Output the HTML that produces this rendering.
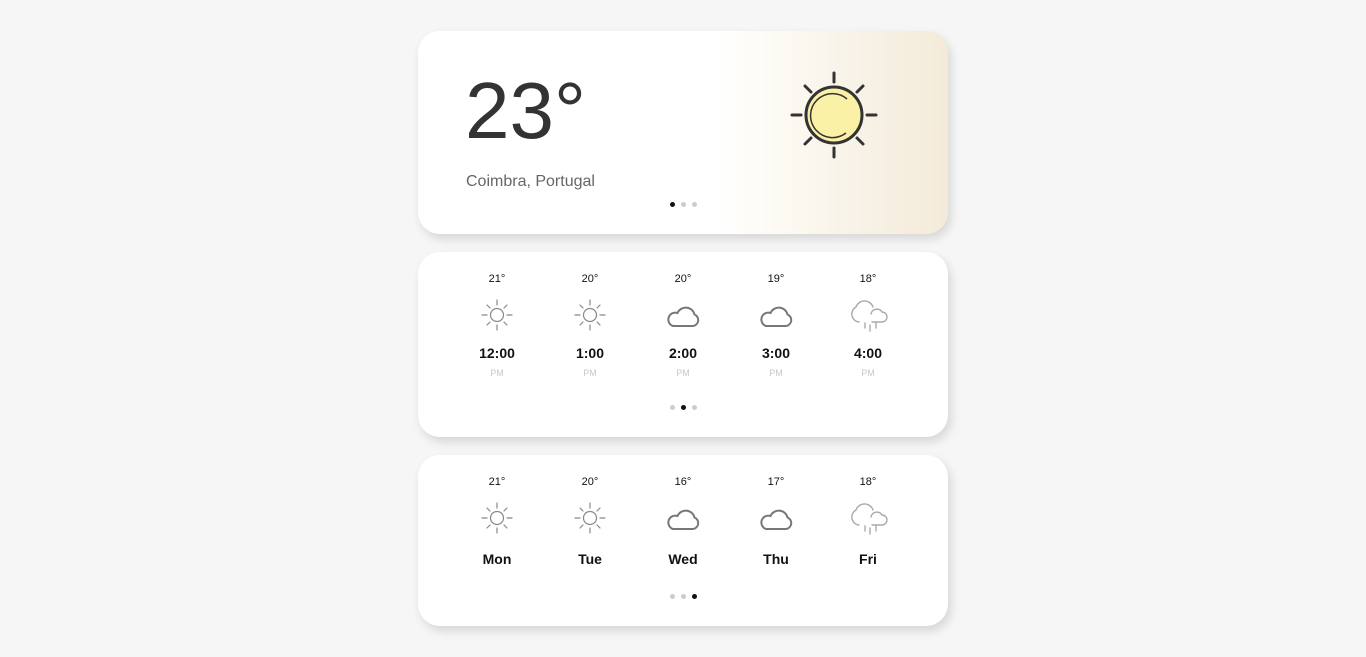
<!DOCTYPE html>
<html><head><meta charset="utf-8"><style>
*{margin:0;padding:0;box-sizing:border-box}
body{width:1366px;height:657px;background:#f6f6f6;font-family:"Liberation Sans",Arial,sans-serif;position:relative;overflow:hidden}
.card{position:absolute;left:418px;width:530px;background:#fff;border-radius:22px;box-shadow:3px 5px 10px rgba(0,0,0,0.13)}
.c1{top:31px;height:203px;background:linear-gradient(90deg,#fff 0%,#fff 56%,#fdfbf5 66%,#f3ead9 100%)}
.c2{top:252px;height:185px}
.c3{top:455px;height:171px}
.abs{position:absolute}
.col{position:absolute;width:80px;margin-left:-40px;text-align:center}
.t{font-size:11px;color:#111}
.h{font-size:14px;font-weight:bold;color:#111}
.pm{font-size:9px;color:#c8c8c8}
.dots{position:absolute;left:670px;width:30px;height:6px}
.dots i{position:absolute;top:0;width:5px;height:5px;border-radius:50%;background:#ccc}
.dots i.on{background:#111}
svg{position:absolute}
</style></head><body>
<div class="card c1"></div>
<div class="card c2"></div>
<div class="card c3"></div>

<div class="abs" style="left:465px;top:68px;font-size:80px;color:#333;line-height:86px">23°</div>
<div class="abs" style="left:466px;top:173px;font-size:16px;color:#666">Coimbra, Portugal</div>
<div class="dots" style="top:202px"><i class="on" style="left:0"></i><i style="left:11px"></i><i style="left:22px"></i></div>

<svg style="left:784px;top:65px" width="100" height="100" viewBox="0 0 100 100">
<g stroke="#333" stroke-width="3" stroke-linecap="round">
<line x1="50" y1="8" x2="50" y2="17"/><line x1="50" y1="83" x2="50" y2="92"/>
<line x1="8" y1="50" x2="17" y2="50"/><line x1="83" y1="50" x2="92" y2="50"/>
<line x1="21" y1="21" x2="27" y2="27"/><line x1="73" y1="73" x2="79" y2="79"/>
<line x1="79" y1="21" x2="73" y2="27"/><line x1="27" y1="73" x2="21" y2="79"/>
</g>
<circle cx="50" cy="50" r="28" fill="#fbf1a6" stroke="#333" stroke-width="3"/>
<path d="M63 34 A22 22 0 1 0 62 68" fill="none" stroke="#333" stroke-width="1.5"/>
</svg>

<div class="col t" style="left:497px;top:273px">21°</div>
<div class="col t" style="left:590px;top:273px">20°</div>
<div class="col t" style="left:683px;top:273px">20°</div>
<div class="col t" style="left:776px;top:273px">19°</div>
<div class="col t" style="left:868px;top:273px">18°</div>
<div class="col h" style="left:497px;top:345px">12:00</div>
<div class="col h" style="left:590px;top:345px">1:00</div>
<div class="col h" style="left:683px;top:345px">2:00</div>
<div class="col h" style="left:776px;top:345px">3:00</div>
<div class="col h" style="left:868px;top:345px">4:00</div>
<div class="col pm" style="left:497px;top:368px">PM</div>
<div class="col pm" style="left:590px;top:368px">PM</div>
<div class="col pm" style="left:683px;top:368px">PM</div>
<div class="col pm" style="left:776px;top:368px">PM</div>
<div class="col pm" style="left:868px;top:368px">PM</div>
<div class="dots" style="top:405px"><i style="left:0"></i><i class="on" style="left:11px"></i><i style="left:22px"></i></div>

<div class="col t" style="left:497px;top:476px">21°</div>
<div class="col t" style="left:590px;top:476px">20°</div>
<div class="col t" style="left:683px;top:476px">16°</div>
<div class="col t" style="left:776px;top:476px">17°</div>
<div class="col t" style="left:868px;top:476px">18°</div>
<div class="col h" style="left:497px;top:551px">Mon</div>
<div class="col h" style="left:590px;top:551px">Tue</div>
<div class="col h" style="left:683px;top:551px">Wed</div>
<div class="col h" style="left:776px;top:551px">Thu</div>
<div class="col h" style="left:868px;top:551px">Fri</div>
<div class="dots" style="top:594px"><i style="left:0"></i><i style="left:11px"></i><i class="on" style="left:22px"></i></div>

<svg width="0" height="0" style="position:absolute">
<defs>
<g id="sun" stroke="#888" stroke-width="1.2" fill="none" stroke-linecap="round">
<circle cx="18" cy="18" r="6.5"/>
<line x1="18" y1="3" x2="18" y2="8"/><line x1="18" y1="28" x2="18" y2="33"/>
<line x1="3" y1="18" x2="8" y2="18"/><line x1="28" y1="18" x2="33" y2="18"/>
<line x1="8" y1="8" x2="11" y2="11"/><line x1="25" y1="25" x2="28" y2="28"/>
<line x1="28" y1="8" x2="25" y2="11"/><line x1="11" y1="25" x2="8" y2="28"/>
</g>
<path id="cloud" d="M8 23 H28 A6 6 0 0 0 29.5 11.5 A9 9 0 0 0 12.5 10 A6.5 6.5 0 0 0 8 23 Z" fill="none" stroke="#777" stroke-width="2"/>
<g id="rain" fill="none" stroke="#aaa" stroke-width="1.4" stroke-linecap="round">
<path d="M10 25 A8 8 0 0 1 7 10 A9 9 0 0 1 24 10"/>
<path d="M23 25 H33 A5 5 0 0 0 33 15 A6 6 0 0 0 22 17"/>
<line x1="16" y1="26" x2="16" y2="31"/><line x1="21" y1="28" x2="21" y2="34"/><line x1="27" y1="26" x2="27" y2="31"/>
</g>
</defs></svg>

<svg style="left:479px;top:297px" width="36" height="36"><use href="#sun"/></svg>
<svg style="left:572px;top:297px" width="36" height="36"><use href="#sun"/></svg>
<svg style="left:665px;top:303px" width="36" height="26"><use href="#cloud"/></svg>
<svg style="left:758px;top:303px" width="36" height="26"><use href="#cloud"/></svg>
<svg style="left:849px;top:297px" width="40" height="36"><use href="#rain"/></svg>

<svg style="left:479px;top:500px" width="36" height="36"><use href="#sun"/></svg>
<svg style="left:572px;top:500px" width="36" height="36"><use href="#sun"/></svg>
<svg style="left:665px;top:506px" width="36" height="26"><use href="#cloud"/></svg>
<svg style="left:758px;top:506px" width="36" height="26"><use href="#cloud"/></svg>
<svg style="left:849px;top:500px" width="40" height="36"><use href="#rain"/></svg>
</body></html>
